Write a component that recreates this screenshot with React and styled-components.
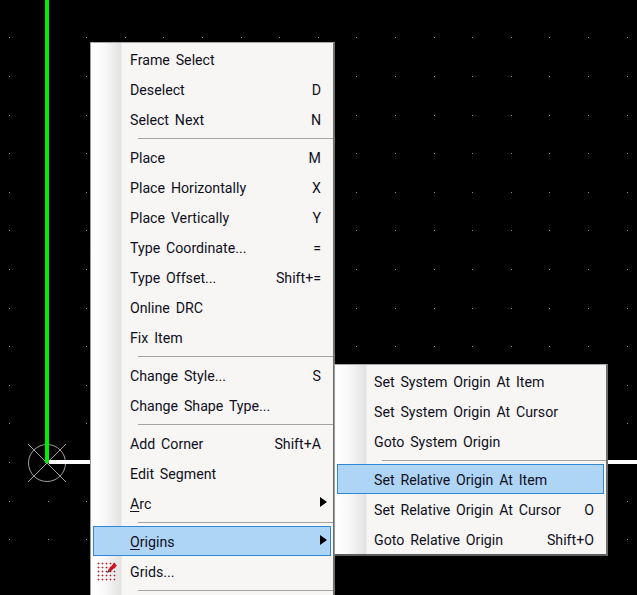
import React from 'react';
import styled, { createGlobalStyle } from 'styled-components';

const Global = createGlobalStyle`
  html, body { margin: 0; padding: 0; background: #000; }
  #root { width: 637px; height: 595px; }
`;

const Canvas = styled.div`
  position: relative;
  width: 637px;
  height: 595px;
  overflow: hidden;
  background: #000;
`;

const Board = styled.svg`
  display: block;
`;

const Panel = styled.div`
  position: absolute;
  left: ${p => p.$left}px;
  top: ${p => p.$top}px;
  width: ${p => p.$width}px;
  height: ${p => p.$height};
  box-sizing: border-box;
  padding: 1px 0 0 0;
  display: flex;
  flex-direction: column;
  background: linear-gradient(90deg, #ffffff 0, #fafafa 12px, #e2e2e2 ${p => p.$gutter - 1}px, #f7f6f4 ${p => p.$gutter}px);
  border-top: 1px solid #a8a8a8;
  border-left: 1px solid #9a9a9a;
  border-right: 2px solid #6f6f6f;
  border-bottom: 2px solid #5c5c5c;
  font-family: "Roboto", "Noto Sans", sans-serif;
  font-size: 14.2px;
  word-spacing: 2.3px;
  color: #10101c;
`;

const Row = styled.div`
  height: 30px;
  box-sizing: border-box;
  display: flex;
  align-items: center;
  flex-shrink: 0;
  position: relative;
  margin: 0 2px;
  padding: 1px 9px 0 36px;
  border: 1px solid ${p => (p.$active ? '#2f87d6' : 'transparent')};
  background: ${p => (p.$active ? '#aed4f6' : 'transparent')};
  white-space: nowrap;
`;

const Label = styled.span`
  flex: 1;
  line-height: 18px;
`;

const Key = styled.span`
  line-height: 18px;
`;

const Under = styled.span`
  text-decoration: underline;
  text-underline-offset: 2px;
`;

const Arrow = styled.i`
  position: absolute;
  right: 3px;
  top: 8px;
  width: 0;
  height: 0;
  border-left: 7px solid #000;
  border-top: 5.5px solid transparent;
  border-bottom: 5.5px solid transparent;
`;

const Separator = styled.div`
  height: 8px;
  flex-shrink: 0;
  display: flex;
  align-items: center;
  padding-left: 47px;
  &::after {
    content: '';
    flex: 1;
    height: 1px;
    background: #a3a3a1;
  }
`;

const IconSlot = styled.svg`
  position: absolute;
  left: 0;
  top: 3px;
`;

const dots = [];
for (let r = 0; r < 15; r++) {
  for (let c = 0; c < 17; c++) {
    dots.push([Math.round(9 + c * 38.6), Math.round(-1.2 + r * 38.6)]);
  }
}

function GridIcon() {
  const cells = [];
  for (let y = 0; y < 5; y++) {
    for (let x = 0; x < 5; x++) {
      const cx = 4 + x * 4;
      const cy = 3 + y * 4;
      cells.push(
        <g key={`${x}-${y}`}>
          <path d={`M${cx - 1} ${cy + 0.5} h3 M${cx + 0.5} ${cy - 1} v3`} stroke="#e6a9ad" strokeWidth="1" />
          <rect x={cx} y={cy} width="1" height="1" fill="#a81e2c" />
        </g>
      );
    }
  }
  return (
    <IconSlot width="24" height="24" viewBox="0 0 24 24">
      {cells}
      <path d="M13 13 L14.5 9.5 L16.5 11.5 Z" fill="#333" />
      <path d="M14.5 9.5 L20 3 L23 5.5 L16.5 11.5 Z" fill="#d8101c" />
    </IconSlot>
  );
}

const mainItems = [
  ['Frame Select'], ['Deselect', 'D'], ['Select Next', 'N'], null,
  ['Place', 'M'], ['Place Horizontally', 'X'], ['Place Vertically', 'Y'],
  ['Type Coordinate...', '='], ['Type Offset...', 'Shift+='], ['Online DRC'], ['Fix Item'], null,
  ['Change Style...', 'S'], ['Change Shape Type...'], null,
  ['Add Corner', 'Shift+A'], ['Edit Segment'],
];

const subItems = [
  ['Set System Origin At Item'], ['Set System Origin At Cursor'], ['Goto System Origin'], null,
  ['Set Relative Origin At Item', '', true], ['Set Relative Origin At Cursor', 'O'], ['Goto Relative Origin', 'Shift+O'],
];

export default function App() {
  return (
    <Canvas>
      <Global />
      <Board width="637" height="595" viewBox="0 0 637 595">
        {dots.map(([x, y]) => (
          <rect key={`${x}-${y}`} x={x} y={y} width="1" height="1" fill="#8f8f8f" />
        ))}
        <circle cx="47" cy="463" r="18.5" fill="none" stroke="#a0a0a0" strokeWidth="1" />
        <path d="M28 444 L66 482 M66 444 L28 482" stroke="#a0a0a0" strokeWidth="1" />
        <rect x="45" y="0" width="4" height="463" fill="#00f000" />
        <rect x="49" y="460" width="588" height="4" fill="#ffffff" />
      </Board>
      <Panel $left={90} $top={42} $width={245} $gutter={31} $height="560px">
        {mainItems.map((it, i) =>
          it ? (
            <Row key={i}>
              <Label>{it[0]}</Label>
              {it[1] && <Key>{it[1]}</Key>}
            </Row>
          ) : (
            <Separator key={i} />
          )
        )}
        <Row>
          <Label><Under>A</Under>rc</Label>
          <Arrow />
        </Row>
        <Separator />
        <Row $active>
          <Label><Under>O</Under>rigins</Label>
          <Arrow />
        </Row>
        <Row>
          <GridIcon />
          <Label>Grids...</Label>
        </Row>
        <Separator />
      </Panel>
      <Panel $left={334} $top={364} $width={274} $gutter={32} $height="auto">
        {subItems.map((it, i) =>
          it ? (
            <Row key={i} $active={it[2]}>
              <Label>{it[0]}</Label>
              {it[1] && <Key>{it[1]}</Key>}
            </Row>
          ) : (
            <Separator key={i} />
          )
        )}
      </Panel>
    </Canvas>
  );
}
